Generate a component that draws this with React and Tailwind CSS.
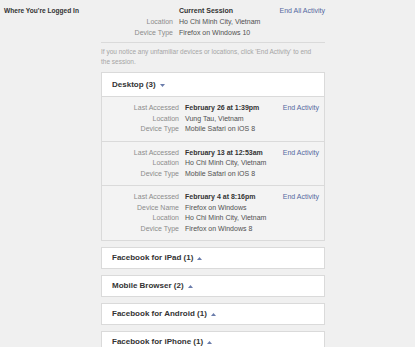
import React from 'react';

const sessions = [
  {
    rows: [
      ['Last Accessed', 'February 26 at 1:39pm'],
      ['Location', 'Vung Tau, Vietnam'],
      ['Device Type', 'Mobile Safari on iOS 8'],
    ],
  },
  {
    rows: [
      ['Last Accessed', 'February 13 at 12:53am'],
      ['Location', 'Ho Chi Minh City, Vietnam'],
      ['Device Type', 'Mobile Safari on iOS 8'],
    ],
  },
  {
    rows: [
      ['Last Accessed', 'February 4 at 8:16pm'],
      ['Device Name', 'Firefox on Windows'],
      ['Location', 'Ho Chi Minh City, Vietnam'],
      ['Device Type', 'Firefox on Windows 8'],
    ],
  },
];

const groups = [
  'Facebook for iPad (1)',
  'Mobile Browser (2)',
  'Facebook for Android (1)',
  'Facebook for iPhone (1)',
];

function Caret({ up }) {
  return (
    <svg width="5" height="3" viewBox="0 0 5 3" className="ml-[4px] mt-[1px]">
      {up ? (
        <path d="M0 3 L2.5 0 L5 3 Z" fill="#6a7cab" />
      ) : (
        <path d="M0 0 L5 0 L2.5 3 Z" fill="#6a7cab" />
      )}
    </svg>
  );
}

export default function App() {
  return (
    <div className="w-[415px] h-[347px] overflow-hidden bg-[#f0f0f0] flex font-['Liberation_Sans',Arial,sans-serif]">
      {/* 左栏标题 */}
      <div className="w-[101px] pl-[4px] pt-[5px]">
        <div className="text-[6.6px] leading-[11px] font-bold text-[#333] whitespace-nowrap">
          Where You're Logged In
        </div>
      </div>

      <div className="w-[224px] flex flex-col">
        {/* 当前会话 */}
        <div className="pt-[5px] text-[7px] leading-[11px]">
          <div className="flex">
            <div className="w-[72px]" />
            <div className="ml-[6px] flex-1 font-bold text-[#333]">Current Session</div>
            <div className="text-[#5468a0] whitespace-nowrap">End All Activity</div>
          </div>
          <div className="flex">
            <div className="w-[72px] text-right text-[#8c8c8c]">Location</div>
            <div className="ml-[6px] text-[#505050]">Ho Chi Minh City, Vietnam</div>
          </div>
          <div className="flex">
            <div className="w-[72px] text-right text-[#8c8c8c]">Device Type</div>
            <div className="ml-[6px] text-[#505050]">Firefox on Windows 10</div>
          </div>
        </div>

        <div className="mt-[4px] border-t border-[#dadada]" />

        <div className="mt-[4px] text-[6.5px] leading-[10px] text-[#a5a5a5] whitespace-nowrap">
          If you notice any unfamiliar devices or locations, click 'End Activity' to end
          <br />
          the session.
        </div>

        {/* Desktop 展开 */}
        <div className="mt-[5px] border border-[#dadada] bg-white">
          <div className="h-[23px] pl-[10px] flex items-center text-[8px] font-bold text-[#333]">
            Desktop (3)
            <Caret />
          </div>
          {sessions.map((s, i) => (
            <div key={i} className="border-t border-[#dadada] bg-[#f3f3f3] px-[5px] py-[6px] flex text-[7px] leading-[10.5px]">
              <div className="flex-1">
                {s.rows.map(([label, value], j) => (
                  <div key={j} className="flex">
                    <div className="w-[72px] text-right text-[#8c8c8c]">{label}</div>
                    <div className={`ml-[6px] ${j === 0 ? 'font-bold text-[#333]' : 'text-[#505050]'}`}>
                      {value}
                    </div>
                  </div>
                ))}
              </div>
              <div className="text-[#5468a0] whitespace-nowrap">End Activity</div>
            </div>
          ))}
        </div>

        {/* 折叠分组 */}
        {groups.map((g) => (
          <div
            key={g}
            className="mt-[6px] h-[22px] shrink-0 border border-[#dadada] bg-white pl-[10px] flex items-center text-[8px] font-bold text-[#333]"
          >
            {g}
            <Caret up />
          </div>
        ))}
      </div>
    </div>
  );
}
